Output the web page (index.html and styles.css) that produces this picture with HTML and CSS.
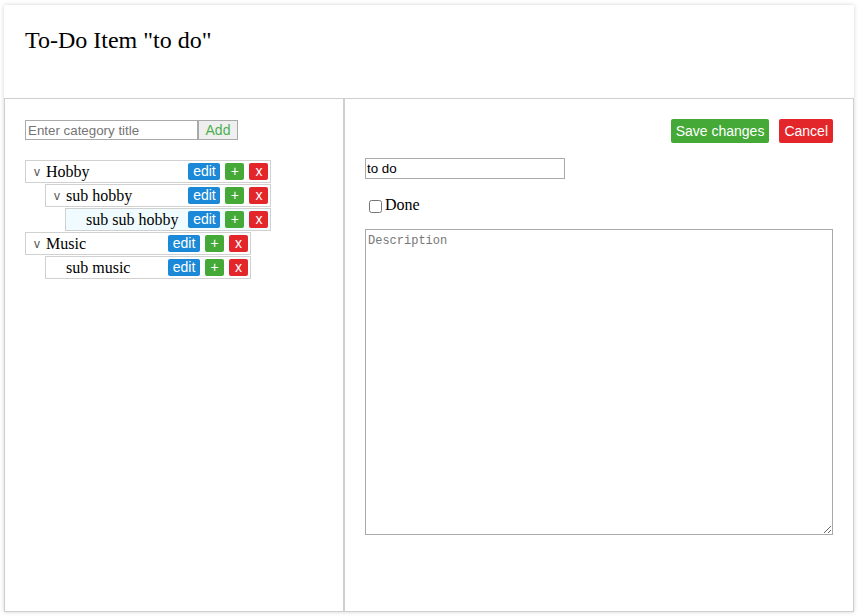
FILE: index.html
```html
<!DOCTYPE html>
<html lang="en">
<head>
<meta charset="utf-8">
<title>To-Do Item</title>
<link rel="stylesheet" href="styles.css">
</head>
<body>
<div class="card">
  <header class="header">
    <h1 class="title">To-Do Item "to do"</h1>
  </header>
  <div class="panels">
    <section class="panel panel-left">
      <div class="add-row">
        <input class="cat-input" type="text" placeholder="Enter category title">
        <button class="add-btn" type="button">Add</button>
      </div>
      <div class="tree">
        <div class="node">
          <div class="row"><span class="caret">v</span><span class="name">Hobby</span><span class="actions"><button class="btn edit">edit</button><button class="btn plus">+</button><button class="btn del">x</button></span></div>
          <div class="children">
            <div class="node">
              <div class="row"><span class="caret">v</span><span class="name">sub hobby</span><span class="actions"><button class="btn edit">edit</button><button class="btn plus">+</button><button class="btn del">x</button></span></div>
              <div class="children">
                <div class="node">
                  <div class="row row-selected"><span class="caret"></span><span class="name">sub sub hobby</span><span class="actions"><button class="btn edit">edit</button><button class="btn plus">+</button><button class="btn del">x</button></span></div>
                </div>
              </div>
            </div>
          </div>
        </div>
        <div class="node">
          <div class="row"><span class="caret">v</span><span class="name">Music</span><span class="actions"><button class="btn edit">edit</button><button class="btn plus">+</button><button class="btn del">x</button></span></div>
          <div class="children">
            <div class="node">
              <div class="row"><span class="caret"></span><span class="name">sub music</span><span class="actions"><button class="btn edit">edit</button><button class="btn plus">+</button><button class="btn del">x</button></span></div>
            </div>
          </div>
        </div>
      </div>
    </section>
    <section class="panel panel-right">
      <div class="top-actions">
        <button class="big-btn save" type="button">Save changes</button>
        <button class="big-btn cancel" type="button">Cancel</button>
      </div>
      <input class="item-input" type="text" value="to do">
      <label class="done"><input class="done-check" type="checkbox"> Done</label>
      <textarea class="desc" placeholder="Description"></textarea>
    </section>
  </div>
</div>
</body>
</html>
```
FILE: styles.css
```css
* { box-sizing: border-box; }
html, body { margin: 0; padding: 0; }
body {
  background: #ffffff;
  padding: 5px 4px 4px 4px;
  font-family: "Liberation Serif", "Times New Roman", serif;
  font-size: 16px;
  color: #000;
}
.card {
  background: #fff;
  height: 607px;
  box-shadow: 0 0 4px rgba(0,0,0,0.18);
  display: flex;
  flex-direction: column;
}
.header {
  height: 93px;
  padding: 21px 21px;
}
.title {
  margin: 0;
  font-size: 24px;
  font-weight: normal;
  line-height: 28px;
}
.panels {
  flex: 1;
  display: flex;
}
.panel {
  border: 1px solid #cfcfcf;
  padding: 20px;
}
.panel-left { width: 340px; padding-top: 21px; }
.panel-right { flex: 1; display: flex; flex-direction: column; align-items: flex-start; }

.add-row { display: flex; height: 20px; }
.cat-input {
  width: 173px;
  height: 20px;
  margin: 0;
  padding: 0 2px;
  border: 1px solid #a9a9a9;
  font: 13.33px "Liberation Sans", Arial, sans-serif;
}
.cat-input::placeholder { color: #757575; }
.add-btn {
  width: 40px;
  height: 20px;
  margin: 0;
  padding: 0;
  border: 1px solid #a9a9a9;
  background: #efefef;
  color: #4caf50;
  font: 14px "Liberation Sans", Arial, sans-serif;
}

.tree { margin-top: 20px; }
.node { width: fit-content; }
.children { margin-left: 20px; }
.row {
  display: flex;
  align-items: center;
  min-width: 206px;
  border: 1px solid #d0d0d0;
  padding: 2px;
  margin-bottom: 1px;
  line-height: 17px;
}
.row-selected { background: #f0fbff; }
.caret {
  width: 18px;
  flex: none;
  text-align: center;
  font: 12px "Liberation Sans", Arial, sans-serif;
  color: #555;
}
.name { margin-right: 10px; white-space: nowrap; }
.actions { margin-left: auto; display: flex; gap: 5px; }
.btn {
  height: 17px;
  margin: 0;
  padding: 0;
  border: 0;
  border-radius: 2px;
  color: #fff;
  font: 14px/17px "Liberation Sans", Arial, sans-serif;
  text-align: center;
}
.edit { width: 32px; background: #1b88d8; }
.plus { width: 19px; background: #45a938; }
.del { width: 19px; background: #e3262a; }

.top-actions {
  align-self: stretch;
  display: flex;
  justify-content: flex-end;
  gap: 10px;
}
.big-btn {
  height: 24px;
  margin: 0;
  padding: 0 5px;
  border: 0;
  border-radius: 2px;
  color: #fff;
  white-space: nowrap;
  font: 14px "Liberation Sans", Arial, sans-serif;
}
.save { background: #45a938; }
.cancel { background: #e3262a; }
.item-input {
  margin-top: 15px;
  width: 200px;
  height: 21px;
  padding: 0 1px;
  border: 1px solid #a9a9a9;
  font: 13.33px "Liberation Sans", Arial, sans-serif;
}
.done {
  margin-top: 16px;
  display: flex;
  align-items: center;
  line-height: 20px;
}
.done-check { margin: 2px 3px 0 4px; width: 13px; height: 13px; }
.desc {
  margin-top: 14px;
  align-self: stretch;
  height: 306px;
  border: 1px solid #a9a9a9;
  padding: 4px 2px 2px;
  font: 12px "Liberation Mono", monospace;
  resize: both;
}
.desc::placeholder { color: #777; }
```
